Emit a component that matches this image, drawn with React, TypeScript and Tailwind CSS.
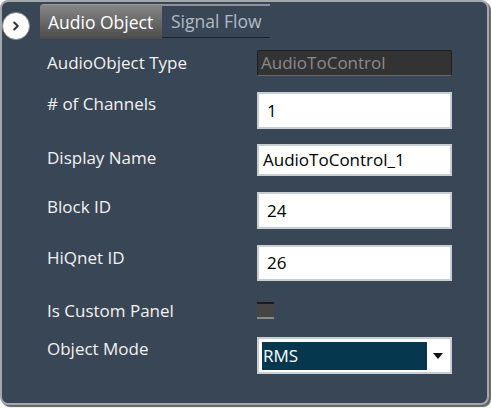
import { ChevronRight } from "lucide-react";

const font = { fontFamily: '"Open Sans", "Noto Sans", sans-serif' };

const Row = ({
  label,
  labelTop,
  top,
  children,
}: {
  label: string;
  labelTop: string;
  top: string;
  children: React.ReactNode;
}) => (
  <div className={`flex items-start ${top}`}>
    <div className={`w-[255px] pl-[45px] text-[17px] leading-5 text-[#f2f2f2] ${labelTop}`}>
      {label}
    </div>
    {children}
  </div>
);

const Field = ({ value, h }: { value: string; h: string }) => (
  <div
    className={`w-[195px] ${h} bg-white border-2 border-[#c9ced3] flex items-center pl-2 text-[17px] text-black`}
  >
    {value}
  </div>
);

export default function App() {
  return (
    <div className="w-[491px] h-[410px] bg-white" style={font}>
      <div className="w-[489px] h-[405px] bg-[#394655] border-2 border-[#a3a8ad] rounded-[8px] shadow-[2px_2px_1px_rgba(60,60,60,0.8)] flex flex-col">
        {/* TABS */}
        <div className="flex items-start mt-[2px]">
          <div className="mt-[8px] w-[28px] h-[28px] rounded-full bg-white border border-[#8a8a8a] flex items-center justify-center">
            <ChevronRight size={14} strokeWidth={3.5} className="text-[#333]" />
          </div>
          <div className="ml-[10px] w-[122px] h-[35px] rounded-tl-[4px] border-t border-[#9a9a9a] bg-gradient-to-b from-[#878787] to-[#4b4b4b] text-white text-[17.5px] flex items-center pl-[8px]">
            Audio Object
          </div>
          <div className="w-[108px] h-[34px] border-t-2 border-t-[#8d949b] border-b border-b-[#1e2329] text-[#b3bbc3] text-[17.5px] flex items-center pl-[9px]">
            Signal Flow
          </div>
        </div>

        {/* FORM */}
        <Row label="AudioObject Type" labelTop="mt-[3px]" top="mt-[10px]">
          <div className="w-[195px] h-[26px] bg-[#333333] border border-[#1f1f1f] border-b-[#6a6a6a] rounded-[2px] flex items-center pl-[3px] text-[17px] text-[#8a8a8a]">
            AudioToControl
          </div>
        </Row>
        <Row label="# of Channels" labelTop="mt-[2px]" top="mt-[16px]">
          <Field value="1" h="h-[37px]" />
        </Row>
        <Row label="Display Name" labelTop="mt-[4px]" top="mt-[15px]">
          <div className="w-[195px] h-[32px] bg-white border-2 border-[#c9ced3] flex items-center pl-[4px] text-[17px] text-black">
            AudioToControl_1
          </div>
        </Row>
        <Row label="Block ID" labelTop="mt-[5px]" top="mt-[16px]">
          <Field value="24" h="h-[37px]" />
        </Row>
        <Row label="HiQnet ID" labelTop="mt-[3px]" top="mt-[16px]">
          <Field value="26" h="h-[36px]" />
        </Row>
        <Row label="Is Custom Panel" labelTop="mt-0" top="mt-[20px]">
          <div className="mt-[1px] w-[17px] h-[17px] bg-[#454545] border-t-2 border-t-[#1c1c1c] border-b-2 border-b-[#8a8a8a]" />
        </Row>
        <Row label="Object Mode" labelTop="mt-[2px]" top="mt-[16px]">
          <div className="w-[195px] h-[37px] bg-white border-2 border-[#c9ced3] flex items-center pl-[3px] pr-[6px]">
            <div className="w-[165px] h-[28px] bg-[#05384f] text-white text-[17px] flex items-center pl-[1px]">
              RMS
            </div>
            <svg width="10" height="6" viewBox="0 0 10 6" className="ml-auto mr-[1px]">
              <path d="M0 0 L10 0 L5 6 Z" fill="#111" />
            </svg>
          </div>
        </Row>
      </div>
    </div>
  );
}
